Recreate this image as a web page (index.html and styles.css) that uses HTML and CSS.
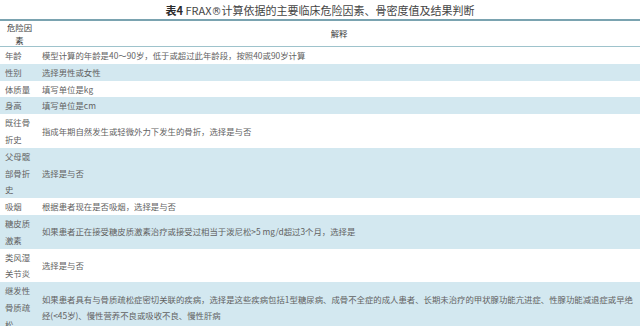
FILE: index.html
```
<!DOCTYPE html>
<html lang="zh-CN">
<head>
<meta charset="utf-8">
<title>FRAX</title>
<link rel="stylesheet" href="styles.css">
</head>
<body>
<div class="page">
  <h1 class="title"><b>表4</b> FRAX<span class="reg">®</span>计算依据的主要临床危险因素、骨密度值及结果判断</h1>
  <table class="risk">
    <colgroup><col class="c1"><col class="c2"></colgroup>
    <thead>
      <tr><th class="h1">危险因素</th><th class="h2">解释</th></tr>
    </thead>
    <tbody>
      <tr><td>年龄</td><td>模型计算的年龄是40～90岁，低于或超过此年龄段，按照40或90岁计算</td></tr>
      <tr class="alt"><td>性别</td><td>选择男性或女性</td></tr>
      <tr><td>体质量</td><td>填写单位是kg</td></tr>
      <tr class="alt"><td>身高</td><td>填写单位是cm</td></tr>
      <tr><td>既往骨折史</td><td>指成年期自然发生或轻微外力下发生的骨折，选择是与否</td></tr>
      <tr class="alt"><td>父母髋部骨折史</td><td>选择是与否</td></tr>
      <tr><td>吸烟</td><td>根据患者现在是否吸烟，选择是与否</td></tr>
      <tr class="alt"><td>糖皮质激素</td><td>如果患者正在接受糖皮质激素治疗或接受过相当于泼尼松&gt;5 mg/d超过3个月，选择是</td></tr>
      <tr><td>类风湿关节炎</td><td>选择是与否</td></tr>
      <tr class="alt"><td>继发性骨质疏松</td><td>如果患者具有与骨质疏松症密切关联的疾病，选择是这些疾病包括1型糖尿病、成骨不全症的成人患者、长期未治疗的甲状腺功能亢进症、性腺功能减退症或早绝经(&lt;45岁)、慢性营养不良或吸收不良、慢性肝病</td></tr>
    </tbody>
  </table>
</div>
</body>
</html>
```
FILE: styles.css
```
html, body {
  margin: 0;
  padding: 0;
  background: #ffffff;
}
body {
  font-family: "Noto Sans CJK SC", "Noto Sans", sans-serif;
  color: #626262;
}
.page {
  width: 640px;
  overflow: hidden;
}
.title {
  margin: 0;
  height: 19px;
  line-height: 20px;
  font-size: 11px;
  font-weight: normal;
  text-align: center;
  color: #444444;
}
.title b {
  font-weight: bold;
  color: #2a2a2a;
}
.title .reg {
  font-family: "DejaVu Sans", sans-serif;
  font-size: 10px;
}
.risk {
  width: 640px;
  table-layout: fixed;
  border-collapse: collapse;
  font-size: 8.4px;
}
.c1 { width: 38px; }
.risk thead tr {
  border-top: 2px solid #7aa3b0;
  border-bottom: 1px solid #9ec3cc;
}
.risk th {
  font-weight: normal;
  color: #3a3a3a;
  line-height: 12.5px;
  padding: 0;
  height: 24px;
  vertical-align: middle;
  text-align: center;
}
.risk th.h1 {
  padding: 0 3px 0 4px;
}
.risk td {
  padding: 0;
  line-height: 16.8px;
  vertical-align: middle;
  text-align: left;
}
.risk td:first-child {
  padding: 0 3px 0 5px;
}
.risk td:last-child {
  padding-left: 4px;
}
.risk tr.alt {
  background: #d3e8f0;
}
```
